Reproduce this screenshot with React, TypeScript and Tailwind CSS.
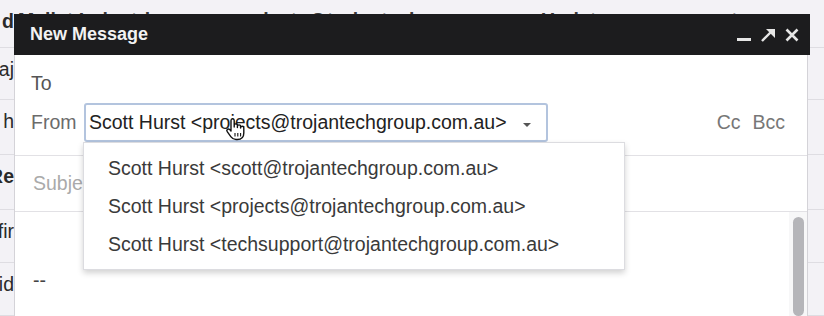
import React from 'react';

const font = { fontFamily: '"Liberation Sans", Arial, sans-serif' };

const HandCursor: React.FC = () => (
  <svg width="24" height="26" viewBox="0 0 24 26" className="absolute left-[209px] top-[61px]">
    <path
      d="M7 12V4.5a1.6 1.6 0 0 1 3.2 0V11V9.5a1.6 1.6 0 0 1 3.2 0V11.5V10.5a1.6 1.6 0 0 1 3.2 0V12V11.8a1.6 1.6 0 0 1 3.2 0V17c0 4-2.6 6.5-6.5 6.5H12c-2.4 0-3.8-1-5-2.6L3.2 15.6a1.6 1.6 0 0 1 2.5-2L7 15z"
      fill="#fff"
      stroke="#111"
      strokeWidth="1.4"
      strokeLinejoin="round"
    />
    <path d="M11 17v3.5M13.8 17v3.5M16.6 17v3.5" stroke="#111" strokeWidth="1.1" />
  </svg>
);

const App: React.FC = () => {
  const rows = [
    { tail: 'd', h: 'h-[48px]', bold: true },
    { tail: 'aj', h: 'h-[52px]', bold: false },
    { tail: 'h', h: 'h-[55px]', bold: false },
    { tail: 'Re', h: 'h-[55px]', bold: true },
    { tail: 'fir', h: 'h-[53px]', bold: false },
    { tail: 'id', h: 'h-[53px]', bold: false },
  ];

  const senders = [
    'Scott Hurst <scott@trojantechgroup.com.au>',
    'Scott Hurst <projects@trojantechgroup.com.au>',
    'Scott Hurst <techsupport@trojantechgroup.com.au>',
  ];

  return (
    <div className="relative w-[824px] h-[316px] overflow-hidden bg-[#f3f2f6] text-[19.5px]" style={font}>
      {/* inbox list behind the compose window */}
      <div className="flex flex-col">
        {rows.map((r, i) => (
          <div key={i} className={`${r.h} flex items-start overflow-hidden border-b border-[#dedde2]`}>
            <div className="w-[14px] shrink-0 flex justify-end overflow-hidden whitespace-nowrap pt-[7px] text-[#2a2a2a]">
              <span className={r.bold ? 'font-bold' : ''}>{r.tail}</span>
            </div>
            {i === 0 && (
              <div className="flex gap-[60px] pt-[6px] pl-[4px] text-[#3a3a3a] font-bold whitespace-nowrap">
                <span>Mallet Industries</span>
                <span>projects@trojantech</span>
                <span className="ml-[60px]">Update</span>
                <span>request</span>
                <span className="ml-[40px]">12:31</span>
              </div>
            )}
          </div>
        ))}
      </div>

      {/* compose window */}
      <div className="absolute left-[14px] top-[14px] w-[796px] bottom-0 flex flex-col">
        <div className="h-[41px] bg-[#1c1c1e] flex items-center justify-between pl-[16px] pr-[10px] shrink-0">
          <span className="text-[18px] font-bold text-[#f2f2f2]">New Message</span>
          <div className="flex items-center gap-[8px]">
            <svg width="16" height="16" viewBox="0 0 16 16">
              <rect x="1" y="11" width="14" height="3" fill="#e6e6e6" />
            </svg>
            <svg width="16" height="16" viewBox="0 0 16 16">
              <path d="M2 14L13 3" stroke="#e6e6e6" strokeWidth="2.4" />
              <path d="M6 2h9v9z" fill="#e6e6e6" />
            </svg>
            <svg width="16" height="16" viewBox="0 0 16 16">
              <path d="M2.5 2.5l11 11M13.5 2.5l-11 11" stroke="#e6e6e6" strokeWidth="2.6" />
            </svg>
          </div>
        </div>

        <div className="relative flex-1 bg-white border-x border-[#d4d3d8] mr-[2px] flex flex-col">
          <div className="px-[16px] pt-[18px] leading-[20px] text-[#555]">To</div>

          <div className="flex items-center pl-[16px] pr-[22px] mt-[10px] pb-[13px] border-b border-[#e2e1e5]">
            <span className="w-[53px] text-[#6b6b6b]">From</span>
            <div className="w-[464px] h-[39px] border-2 border-[#b3c4de] rounded-[3px] flex items-center pl-[3px] text-[#222]">
              <span className="whitespace-nowrap">Scott Hurst &lt;projects@trojantechgroup.com.au&gt;</span>
              <svg width="10" height="6" viewBox="0 0 10 6" className="ml-[15px] mt-[5px]">
                <path d="M1 1h8L5 5z" fill="#555" />
              </svg>
            </div>
            <div className="ml-auto flex gap-[12px] text-[#777]">
              <span>Cc</span>
              <span>Bcc</span>
            </div>
          </div>

          <div className="h-[56px] flex items-center pl-[18px] border-b border-[#e2e1e5] text-[#aaa]">Subject</div>

          <div className="flex-1 flex">
            <div className="flex-1 pl-[18px] pt-[54px] text-[#444]">--</div>
            <div className="w-[18px] pt-[5px] pl-[4px] bg-[#f7f7f8]">
              <div className="w-[11px] h-full rounded-full bg-[#b5b5b9]" />
            </div>
          </div>

          {/* sender dropdown */}
          <div className="absolute left-[68px] top-[87px] w-[542px] h-[128px] bg-white border border-[#dcdce0] shadow-[0_3px_6px_rgba(0,0,0,0.18)] pt-[7px] pl-[24px] text-[#3a3a3a]">
            {senders.map((s) => (
              <div key={s} className="h-[38px] flex items-center whitespace-nowrap">
                {s}
              </div>
            ))}
          </div>

          <HandCursor />
        </div>
      </div>
    </div>
  );
};

export default App;
